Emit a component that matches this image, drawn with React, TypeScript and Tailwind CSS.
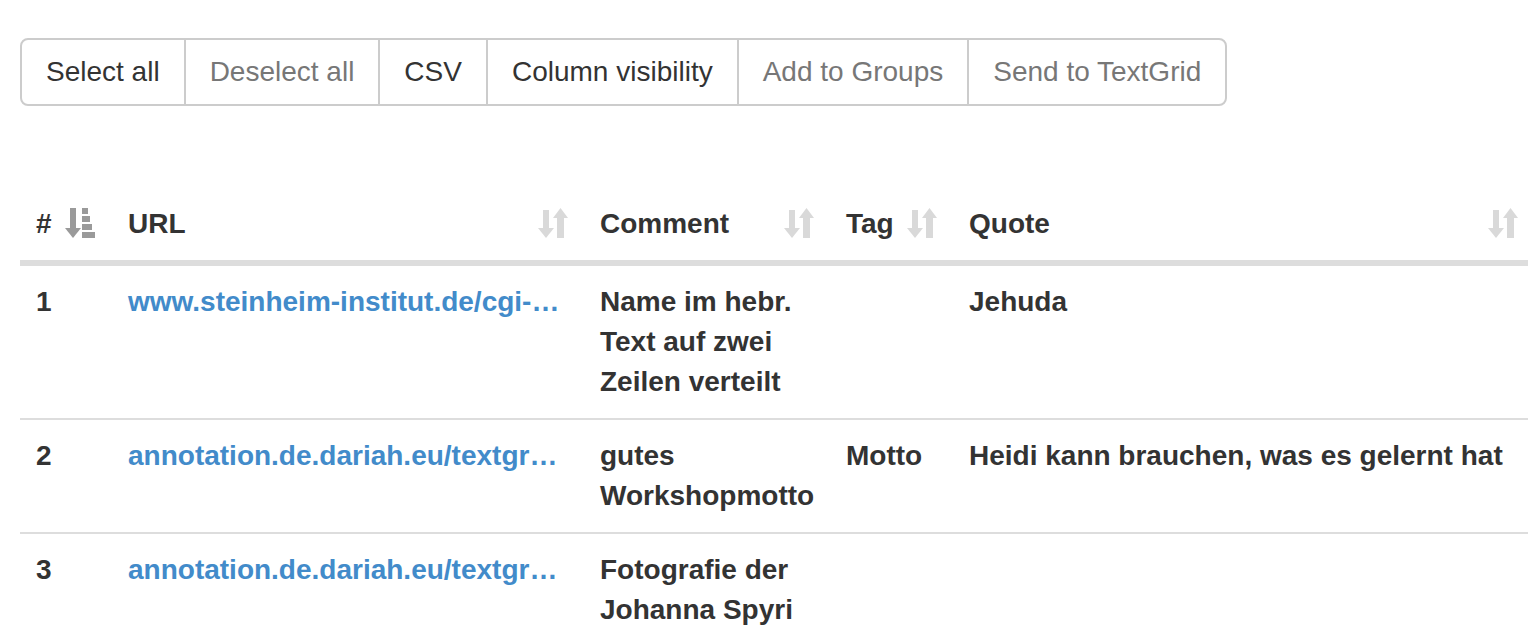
import React from 'react';

const buttons = [
  { label: 'Select all', disabled: false },
  { label: 'Deselect all', disabled: true },
  { label: 'CSV', disabled: false },
  { label: 'Column visibility', disabled: false },
  { label: 'Add to Groups', disabled: true },
  { label: 'Send to TextGrid', disabled: true },
];

const rows = [
  {
    id: 1,
    url: 'www.steinheim-institut.de/cgi-…',
    comment: ['Name im hebr.', 'Text auf zwei', 'Zeilen verteilt'],
    tag: '',
    quote: 'Jehuda',
  },
  {
    id: 2,
    url: 'annotation.de.dariah.eu/textgr…',
    comment: ['gutes', 'Workshopmotto'],
    tag: 'Motto',
    quote: 'Heidi kann brauchen, was es gelernt hat',
  },
  {
    id: 3,
    url: 'annotation.de.dariah.eu/textgr…',
    comment: ['Fotografie der', 'Johanna Spyri'],
    tag: '',
    quote: '',
  },
];

// glyphicon-sort look-alike
const SortIcon = () => (
  <svg width="30" height="30" viewBox="0 0 30 30" className="absolute right-[16px] bottom-[22px]" fill="#d9d9d9">
    <rect x="5" y="2" width="6" height="19" />
    <polygon points="0,20 16,20 8,30" />
    <polygon points="15,10 30,10 22.5,0" />
    <rect x="19" y="9" width="7" height="21" />
  </svg>
);

// glyphicon-sort-by-attributes look-alike
const SortAscIcon = () => (
  <svg width="30" height="30" viewBox="0 0 30 30" className="absolute left-[45px] bottom-[22px]" fill="#9a9a9a">
    <rect x="5" y="0" width="6" height="21" />
    <polygon points="0,20 16,20 8,30" />
    <rect x="17" y="0" width="6" height="6" />
    <rect x="17" y="8" width="8" height="6" />
    <rect x="17" y="16" width="10" height="6" />
    <rect x="17" y="24" width="13" height="6" />
  </svg>
);

const headers = [
  { label: 'URL' },
  { label: 'Comment' },
  { label: 'Tag' },
  { label: 'Quote' },
];

export default function App() {
  return (
    <div className="w-[1528px] h-[644px] overflow-hidden bg-white text-[#333] font-['Liberation_Sans',Arial,sans-serif] text-[28px] leading-[40px]">
      <div className="pt-[38px] pl-[20px]">
        <div className="inline-flex">
          {buttons.map((b, i) => (
            <button
              key={b.label}
              className={`border-2 border-[#ccc] bg-white px-[24px] py-[12px] leading-[40px] whitespace-nowrap ${
                i > 0 ? '-ml-[2px]' : ''
              } ${i === 0 ? 'rounded-l-[8px]' : ''} ${i === buttons.length - 1 ? 'rounded-r-[8px]' : ''} ${
                b.disabled ? 'text-[#777]' : 'text-[#333]'
              }`}
            >
              {b.label}
            </button>
          ))}
        </div>
      </div>

      <div className="mt-[82px] pl-[20px]">
        <table className="w-[1514px] table-fixed border-separate border-spacing-0 font-bold">
          <colgroup>
            <col className="w-[92px]" />
            <col className="w-[472px]" />
            <col className="w-[246px]" />
            <col className="w-[123px]" />
            <col className="w-[581px]" />
          </colgroup>
          <thead>
            <tr>
              <th className="relative text-left pl-[16px] pr-[60px] py-[16px] border-b-4 border-[#ddd]">
                #
                <SortAscIcon />
              </th>
              {headers.map((h) => (
                <th key={h.label} className="relative text-left pl-[16px] pr-[60px] py-[16px] border-b-4 border-[#ddd]">
                  {h.label}
                  <SortIcon />
                </th>
              ))}
            </tr>
          </thead>
          <tbody>
            {rows.map((r) => (
              <tr key={r.id}>
                <td className="align-top p-[16px] border-t-2 border-[#ddd]">{r.id}</td>
                <td className="align-top p-[16px] border-t-2 border-[#ddd] whitespace-nowrap overflow-hidden">
                  <a href="#" className="text-[#428bca]">{r.url}</a>
                </td>
                <td className="align-top p-[16px] border-t-2 border-[#ddd]">
                  {r.comment.map((c) => (
                    <div key={c}>{c}</div>
                  ))}
                </td>
                <td className="align-top p-[16px] border-t-2 border-[#ddd]">{r.tag}</td>
                <td className="align-top p-[16px] border-t-2 border-[#ddd]">{r.quote}</td>
              </tr>
            ))}
          </tbody>
        </table>
      </div>
    </div>
  );
}
